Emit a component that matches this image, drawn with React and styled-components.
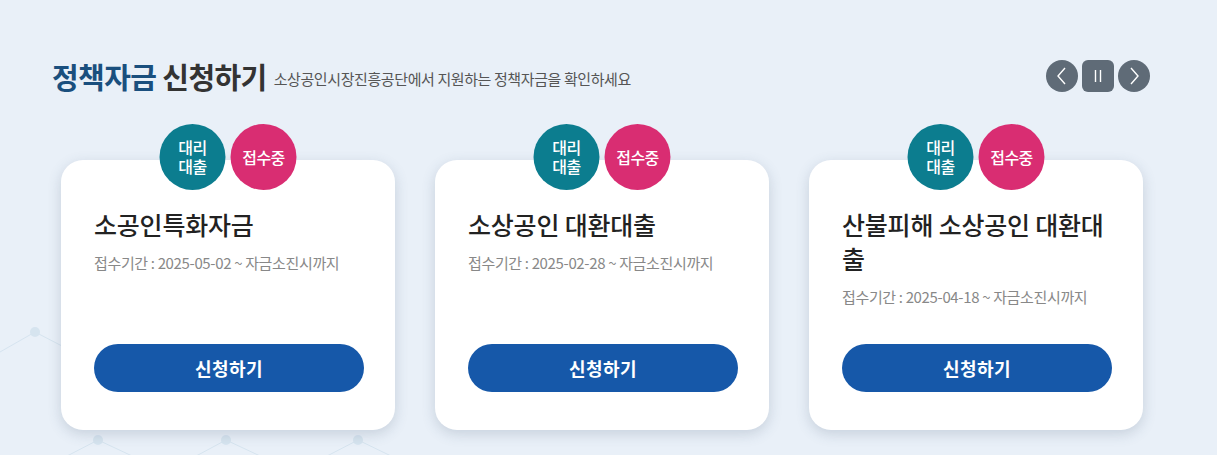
import React from 'react';
import styled, { createGlobalStyle } from 'styled-components';

const GlobalStyle = createGlobalStyle`
  html, body {
    margin: 0;
    padding: 0;
    background: #e9f0f8;
  }
  body {
    font-family: "Noto Sans CJK KR", "Noto Sans", sans-serif;
    overflow: hidden;
  }
`;

const Section = styled.section`
  position: relative;
  width: 1217px;
  height: 455px;
  padding: 60px 67px 0 52px;
  box-sizing: border-box;
  background: #e9f0f8;
  overflow: hidden;
`;

const Pattern = styled.svg`
  position: absolute;
  left: 0;
  top: 0;
  width: 1217px;
  height: 455px;
  pointer-events: none;
`;

const Header = styled.div`
  position: relative;
  display: flex;
  align-items: center;
  height: 32px;
`;

const Title = styled.h2`
  margin: 0;
  font-size: 29px;
  font-weight: 700;
  letter-spacing: -0.6px;
  color: #333;
  line-height: 32px;

  span {
    color: #1a4f7e;
  }
`;

const Sub = styled.p`
  margin: 4px 0 0 7px;
  font-size: 15px;
  letter-spacing: -0.4px;
  color: #555;
`;

const Nav = styled.div`
  margin-left: auto;
  display: flex;
  gap: 4px;
`;

const NavBtn = styled.button`
  width: 32px;
  height: 32px;
  padding: 0;
  border: 0;
  border-radius: ${(p) => (p.$square ? '6px' : '50%')};
  background: #5f6b77;
  display: flex;
  align-items: center;
  justify-content: center;
  cursor: pointer;
`;

const Cards = styled.div`
  position: relative;
  display: grid;
  grid-template-columns: repeat(3, 334px);
  gap: 40px;
  margin-top: 68px;
  padding-left: 9px;
`;

const Card = styled.div`
  position: relative;
  height: 270px;
  box-sizing: border-box;
  padding: 47px 33px 38px;
  background: #fff;
  border-radius: 22px;
  box-shadow: 0 4px 14px rgba(60, 80, 110, 0.2);
  display: flex;
  flex-direction: column;
`;

const Badges = styled.div`
  position: absolute;
  top: -36px;
  left: 50%;
  transform: translateX(-50%);
  display: flex;
  gap: 5px;
`;

const Badge = styled.div`
  width: 66px;
  height: 66px;
  border-radius: 50%;
  background: ${(p) => p.$bg};
  color: #fff;
  font-size: 16px;
  font-weight: 500;
  line-height: 19px;
  letter-spacing: -0.5px;
  text-align: center;
  display: flex;
  align-items: center;
  justify-content: center;
`;

const CardTitle = styled.h3`
  margin: 0;
  font-size: 25px;
  font-weight: 500;
  letter-spacing: -0.2px;
  line-height: 34px;
  color: #222;
`;

const Period = styled.p`
  margin: 11px 0 0;
  font-size: 15px;
  letter-spacing: -0.35px;
  color: #888;
`;

const Apply = styled.button`
  margin-top: auto;
  width: 270px;
  height: 48px;
  border: 0;
  border-radius: 24px;
  background: #1658a9;
  color: #fff;
  font-family: inherit;
  font-size: 18px;
  font-weight: 700;
  letter-spacing: 0.5px;
  cursor: pointer;
`;

const items = [
  { title: '소공인특화자금', period: '2025-05-02' },
  { title: '소상공인 대환대출', period: '2025-02-28' },
  { title: '산불피해 소상공인 대환대출', period: '2025-04-18' },
];

const nodes = [
  [35, 332], [98, 440], [226, 440], [358, 440],
];

export default function App() {
  return (
    <>
      <GlobalStyle />
      <Section>
        <Pattern viewBox="0 0 1217 455">
          <g stroke="#d6e4ef" strokeWidth="1" fill="none">
            <polyline points="0,352 35,332 62,346" />
            <polyline points="40,470 98,440 162,470" />
            <polyline points="170,470 226,440 290,470" />
            <polyline points="300,470 358,440 420,470" />
          </g>
          <g fill="#d6e4ef">
            {nodes.map(([x, y]) => (
              <circle key={x} cx={x} cy={y} r="5" />
            ))}
          </g>
        </Pattern>

        <Header>
          <Title>
            <span>정책자금</span> 신청하기
          </Title>
          <Sub>소상공인시장진흥공단에서 지원하는 정책자금을 확인하세요</Sub>
          <Nav>
            <NavBtn aria-label="이전">
              <svg width="16" height="20" viewBox="0 0 16 20">
                <polyline points="11,2 4,10 11,18" fill="none" stroke="#fff" strokeWidth="1.4" />
              </svg>
            </NavBtn>
            <NavBtn $square aria-label="정지">
              <svg width="12" height="18" viewBox="0 0 12 18">
                <line x1="3.5" y1="3" x2="3.5" y2="15" stroke="#fff" strokeWidth="1.4" />
                <line x1="8.5" y1="3" x2="8.5" y2="15" stroke="#fff" strokeWidth="1.4" />
              </svg>
            </NavBtn>
            <NavBtn aria-label="다음">
              <svg width="16" height="20" viewBox="0 0 16 20">
                <polyline points="5,2 12,10 5,18" fill="none" stroke="#fff" strokeWidth="1.4" />
              </svg>
            </NavBtn>
          </Nav>
        </Header>

        <Cards>
          {items.map((it) => (
            <Card key={it.title}>
              <Badges>
                <Badge $bg="#0c7d8f">대리<br />대출</Badge>
                <Badge $bg="#d92d72">접수중</Badge>
              </Badges>
              <CardTitle>{it.title}</CardTitle>
              <Period>접수기간 : {it.period} ~ 자금소진시까지</Period>
              <Apply>신청하기</Apply>
            </Card>
          ))}
        </Cards>
      </Section>
    </>
  );
}
